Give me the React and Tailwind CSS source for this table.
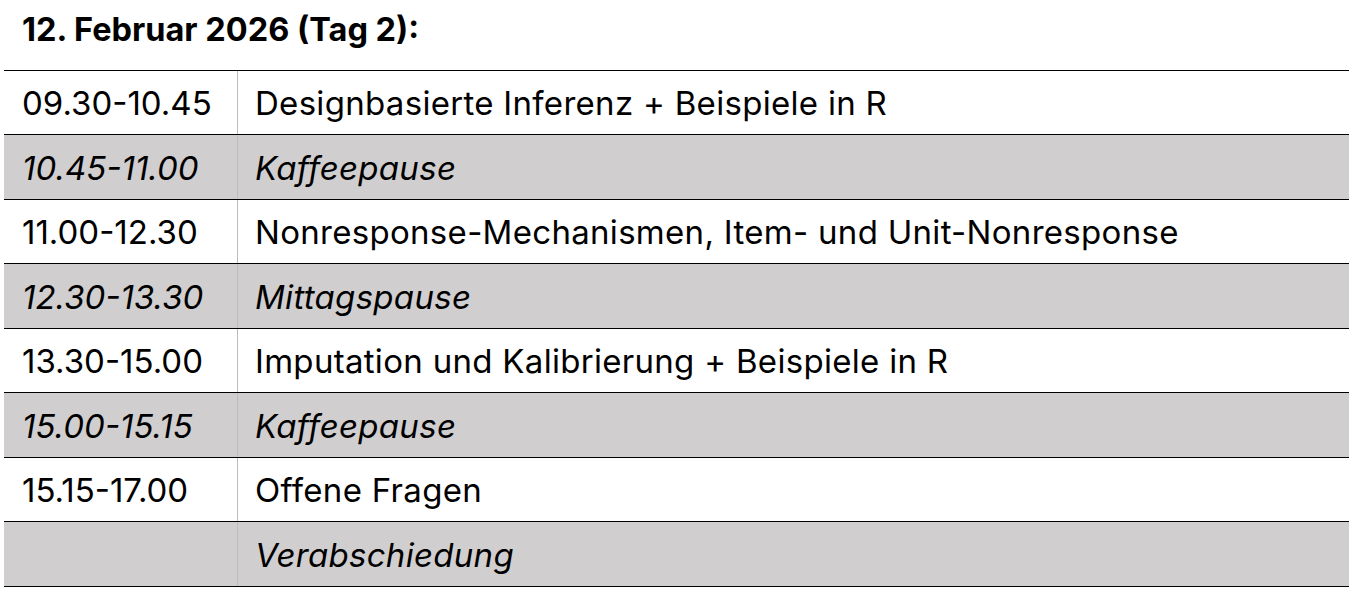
export default function App() {
  const rows = [
    { t: "09.30-10.45", d: "Designbasierte Inferenz + Beispiele in R", g: false, h: "h-[64px]" },
    { t: "10.45-11.00", d: "Kaffeepause", g: true, h: "h-[65px]" },
    { t: "11.00-12.30", d: "Nonresponse-Mechanismen, Item- und Unit-Nonresponse", g: false, h: "h-[64px]" },
    { t: "12.30-13.30", d: "Mittagspause", g: true, h: "h-[65px]" },
    { t: "13.30-15.00", d: "Imputation und Kalibrierung + Beispiele in R", g: false, h: "h-[64px]" },
    { t: "15.00-15.15", d: "Kaffeepause", g: true, h: "h-[65px]" },
    { t: "15.15-17.00", d: "Offene Fragen", g: false, h: "h-[64px]" },
    { t: "", d: "Verabschiedung", g: true, h: "h-[65px]" },
  ];
  return (
    <div className="w-[1363px] h-[595px] bg-white text-black overflow-hidden" style={{ fontFamily: 'Inter, sans-serif' }}>
      <div className="h-[70px] pl-[22px] pt-[8px] text-[32.5px] font-bold leading-[44px]">12. Februar 2026 (Tag 2):</div>
      <div className="ml-[4px] w-[1345px] border-b border-black">
        {rows.map((r, i) => (
          <div key={i} className={`flex border-t border-black ${r.h} ${r.g ? "bg-[#d0cecf] italic" : ""}`}>
            <div className="w-[234px] shrink-0 flex items-center pl-[18px] pt-[3px] text-[33px] border-r border-[#bdbdbd]">{r.t}</div>
            <div className="flex-1 flex items-center pl-[17px] pt-[3px] text-[33px] tracking-[0.3px]">{r.d}</div>
          </div>
        ))}
      </div>
    </div>
  );
}
